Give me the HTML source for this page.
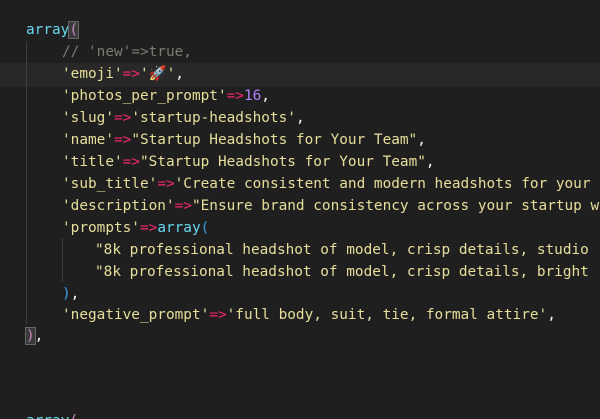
<!DOCTYPE html>
<html><head><meta charset="utf-8"><style>
html,body{margin:0;padding:0;background:#1f1f1f;width:600px;height:419px;overflow:hidden}
.code{position:absolute;left:0;top:0;width:600px;height:419px;overflow:hidden;font-family:"DejaVu Sans Mono","Liberation Mono",monospace;font-size:14.4px;color:#e6df9b}
.l{position:absolute;left:0;height:22px;line-height:22px;white-space:pre}
.hl{position:absolute;left:0;top:63px;width:600px;height:22px;background:#282828;border-top:1px solid #262626;border-bottom:1px solid #262626}
.g{position:absolute;width:1px;background:#404040}
.k{color:#66d9ef}.op{color:#f92672}.n{color:#ae81ff}.c{color:#7a7a72}.w{color:#f8f8f2}
.pp{color:#c586c0;outline:1px solid #666;background:#3a3a3a}.pb{color:#3a9fe8}
</style></head><body>
<div class="hl"></div>
<div class="g" style="left:26px;top:41px;height:283px"></div>
<div class="g" style="left:62px;top:238px;height:44px"></div>
<div class="code">
<div class="l" style="top:19px;left:26px"><span class="k">array</span><span class="pp">(</span></div>
<div class="l c" style="top:41px;left:62px">// 'new'=&gt;true,</div>
<div class="l" style="top:63px;left:62px">'emoji'<span class="op">=&gt;</span>'🚀'<span class="w">,</span></div>
<div class="l" style="top:85px;left:62px">'photos_per_prompt'<span class="op">=&gt;</span><span class="n">16</span><span class="w">,</span></div>
<div class="l" style="top:107px;left:62px">'slug'<span class="op">=&gt;</span>'startup-headshots'<span class="w">,</span></div>
<div class="l" style="top:129px;left:62px">'name'<span class="op">=&gt;</span>"Startup Headshots for Your Team"<span class="w">,</span></div>
<div class="l" style="top:151px;left:62px">'title'<span class="op">=&gt;</span>"Startup Headshots for Your Team"<span class="w">,</span></div>
<div class="l" style="top:173px;left:62px">'sub_title'<span class="op">=&gt;</span>'Create consistent and modern headshots for your</div>
<div class="l" style="top:195px;left:62px">'description'<span class="op">=&gt;</span>"Ensure brand consistency across your startup w</div>
<div class="l" style="top:217px;left:62px">'prompts'<span class="op">=&gt;</span><span class="k">array</span><span class="pb">(</span></div>
<div class="l" style="top:239px;left:95px">"8k professional headshot of model, crisp details, studio</div>
<div class="l" style="top:261px;left:95px">"8k professional headshot of model, crisp details, bright</div>
<div class="l" style="top:283px;left:62px"><span class="pb">)</span><span class="w">,</span></div>
<div class="l" style="top:304px;left:62px">'negative_prompt'<span class="op">=&gt;</span>'full body, suit, tie, formal attire'<span class="w">,</span></div>
<div class="l" style="top:325px;left:26px"><span class="pp">)</span><span class="w">,</span></div>
<div class="l" style="top:410px;left:26px"><span class="k">array</span><span class="pp" style="outline:none;background:none">(</span></div>
</div>
</body></html>
